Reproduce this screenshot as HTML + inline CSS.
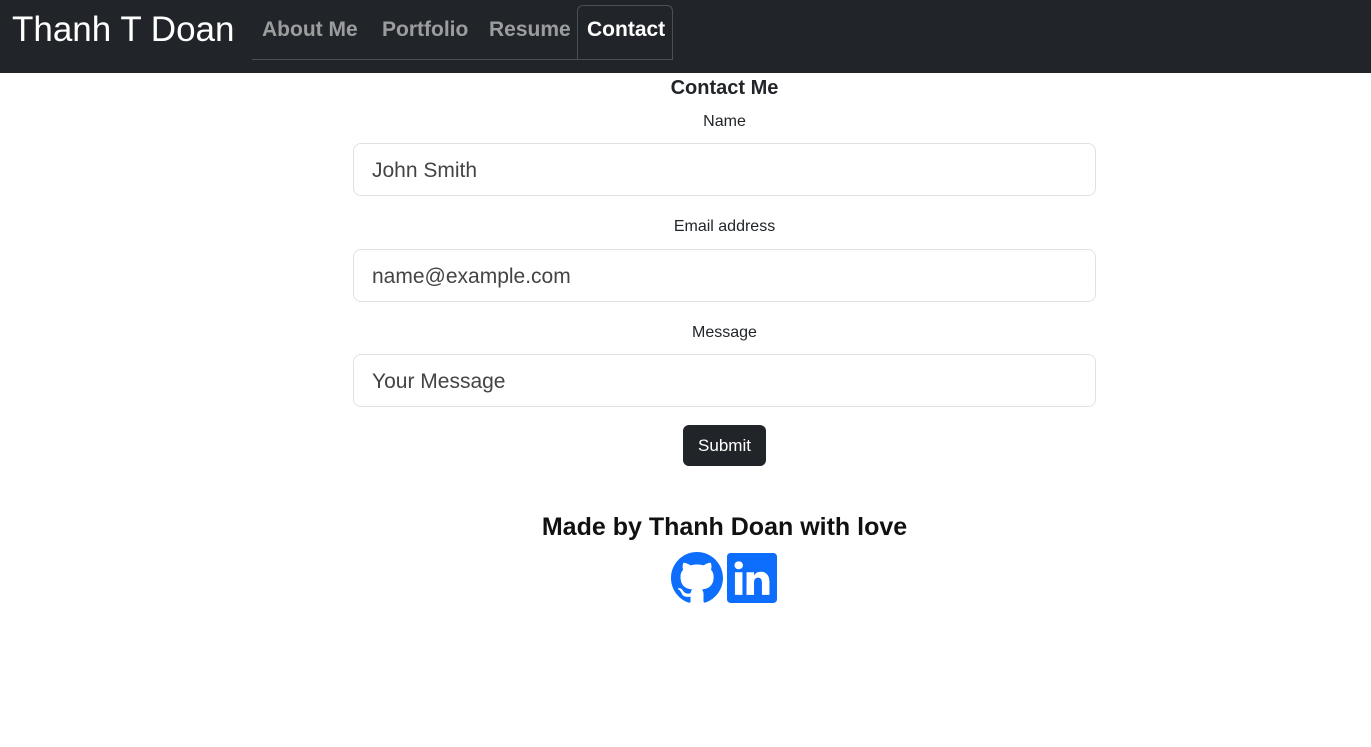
<!DOCTYPE html>
<html><head><meta charset="utf-8"><style>
*{box-sizing:border-box;margin:0;padding:0}
body{width:1371px;height:747px;background:#fff;font-family:"Liberation Sans",sans-serif;color:#212529;overflow:hidden}
.nav{height:73px;background:#212529;position:relative}
.brand{position:absolute;left:12px;top:8px;font-size:35px;color:#fff;line-height:44px}
.tabs{position:absolute;left:252px;top:5px;width:421px;height:55px;border-bottom:1px solid #495057}
.tabs span{position:absolute;top:13px;font-size:21px;color:rgba(255,255,255,.55);font-weight:bold}
.active{position:absolute;left:325px;top:0;width:96px;height:55px;border:1px solid #495057;border-bottom:none;border-radius:6px 6px 0 0}
h2,.lbl,.foot{position:absolute;left:353px;width:743px;text-align:center}
h2{top:77px;font-size:20px;font-weight:bold}
.lbl{font-size:16px}
.inp{position:absolute;left:353px;width:743px;height:53px;border:1px solid #dee2e6;border-radius:8px;padding:0 18px;font-size:21px;line-height:53px;color:#444}
.btn{position:absolute;left:683px;top:425px;width:83px;height:41px;background:#212529;color:#fff;border-radius:6px;font-size:17px;text-align:center;line-height:41px}
.foot{top:513px;font-size:25px;font-weight:bold;color:#111}
</style></head><body>
<div class="nav"><div class="brand">Thanh T Doan</div>
<div class="tabs"><span style="left:10px">About Me</span><span style="left:130px">Portfolio</span><span style="left:237px">Resume</span><div class="active"></div><span style="left:335px;color:#fff">Contact</span></div></div>
<h2>Contact Me</h2>
<div class="lbl" style="top:113px">Name</div>
<div class="inp" style="top:143px">John Smith</div>
<div class="lbl" style="top:218px">Email address</div>
<div class="inp" style="top:249px">name@example.com</div>
<div class="lbl" style="top:324px">Message</div>
<div class="inp" style="top:354px">Your Message</div>
<div class="btn">Submit</div>
<div class="foot">Made by Thanh Doan with love</div>
<svg style="position:absolute;left:671px;top:552px" width="52" height="52" viewBox="0 0 16 16" fill="#0d6efd"><path d="M8 0C3.58 0 0 3.58 0 8c0 3.540 2.290 6.530 5.470 7.590.4.07.55-.17.55-.38 0-.19-.01-.82-.01-1.490-2.010.37-2.530-.49-2.690-.94-.09-.23-.48-.94-.82-1.130-.28-.15-.68-.52-.01-.53.63-.01 1.080.58 1.230.82.72 1.210 1.870.87 2.330.66.07-.52.28-.87.51-1.070-1.780-.2-3.640-.89-3.640-3.950 0-.87.31-1.590.82-2.150-.08-.2-.36-1.020.08-2.120 0 0 .67-.21 2.200.82.64-.18 1.320-.27 2-.27s1.360.09 2 .27c1.530-1.040 2.200-.82 2.200-.82.44 1.100.16 1.920.08 2.120.51.56.82 1.270.82 2.150 0 3.070-1.870 3.750-3.650 3.950.29.25.54.73.54 1.480 0 1.070-.01 1.930-.01 2.200 0 .21.15.46.55.38A8.010 8.010 0 0 0 16 8c0-4.420-3.580-8-8-8"/></svg>
<svg style="position:absolute;left:727px;top:553px" width="50" height="50" viewBox="0 0 16 16" fill="#0d6efd"><path d="M0 1.146C0 .513.526 0 1.175 0h13.65C15.474 0 16 .513 16 1.146v13.708c0 .633-.526 1.146-1.175 1.146H1.175C.526 16 0 15.487 0 14.854zm4.943 12.248V6.169H2.542v7.225zm-1.2-8.212c.837 0 1.358-.554 1.358-1.248-.015-.709-.52-1.248-1.342-1.248S2.400 3.226 2.400 3.934c0 .694.521 1.248 1.327 1.248zm4.908 8.212V9.359c0-.216.016-.432.08-.586.173-.431.568-.878 1.232-.878.869 0 1.216.662 1.216 1.634v3.865h2.401V9.250c0-2.220-1.184-3.252-2.764-3.252-1.274 0-1.845.7-2.165 1.193v.025h-.016l.016-.025V6.169h-2.400c.03.678 0 7.225 0 7.225z"/></svg>
</body></html>
